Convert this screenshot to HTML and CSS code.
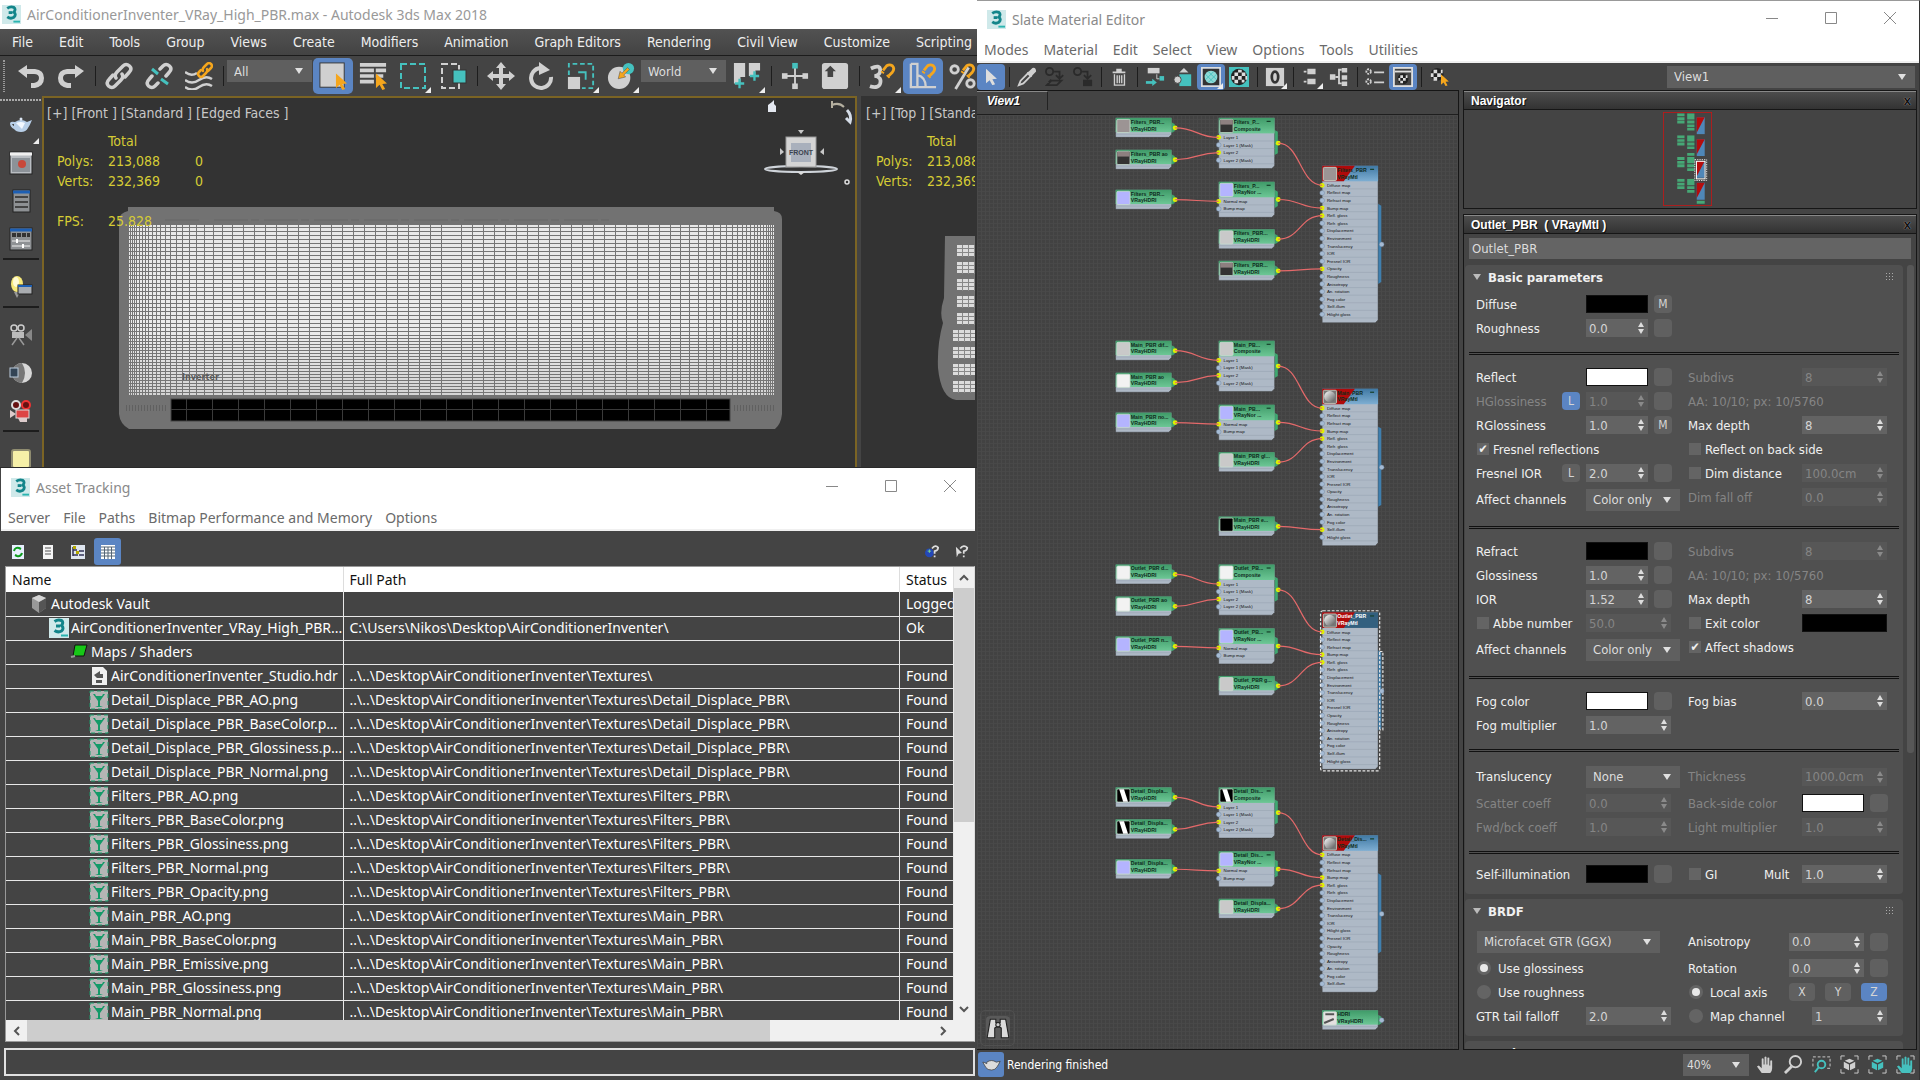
FILE: index.html
```html
<!DOCTYPE html>
<html lang="en">
<head>
    <meta charset="UTF-8">
    <meta name="viewport" content="width=device-width, initial-scale=1.0">
    <title>Autodesk 3ds Max 2018</title>
    <link rel="stylesheet" href="styles.css">
</head>
<body>
    <!-- shared icons -->
    <svg class="defs" width="0" height="0">
        <symbol id="logo" viewBox="0 0 20 20">
            <rect width="20" height="20" fill="#cfe9ea"/>
            <path d="M5.500 3.500Q9 1 12.500 2.500Q15 4.500 12.500 7.500Q15.500 10 12.500 13Q9 15 5.500 12.500" fill="none" stroke="#12858a" stroke-width="3"/>
            <path d="M7 8h4" stroke="#12858a" stroke-width="3"/>
            <path d="M12 17.500h7" stroke="#2bb5b0" stroke-width="2"/>
        </symbol>
        <symbol id="undo" viewBox="0 0 28 28"><path d="M1 9L10 3V7H18Q27 8 27 16Q27 24 18 26H14V21H17Q22 20 22 16Q22 12 17 12H10V16Z"/></symbol>
        <symbol id="redo" viewBox="0 0 28 28"><path d="M27 9L18 3V7H10Q1 8 1 16Q1 24 10 26H14V21H11Q6 20 6 16Q6 12 11 12H18V16Z"/></symbol>
        <symbol id="link" viewBox="0 0 28 28">
            <g fill="none" stroke="#d0d0d0" stroke-width="3.500" stroke-linecap="round">
                <path d="M11 16Q9 13 12 10L18 4Q21 1 24.500 4Q27.500 7 24 10.500L20 15"/>
                <path d="M17 12Q19 15 16 18L10 24Q7 27 3.500 24Q0.500 21 4 17.500L8 13"/>
            </g>
        </symbol>
        <symbol id="unlink" viewBox="0 0 28 28">
            <g fill="none" stroke="#d0d0d0" stroke-width="3.500" stroke-linecap="round">
                <path d="M15 7L18 4Q21 1 24.500 4Q27.500 7 24 10.500L21 14"/>
                <path d="M13 21L10 24Q7 27 3.500 24Q0.500 21 4 17.500L7 14"/>
            </g>
            <path d="M7 7l6 5M16 17l7 5" stroke="#45c1be" stroke-width="3"/>
        </symbol>
        <symbol id="bind" viewBox="0 0 28 28">
            <path d="M0 10q6 5 12 1M0 18q7 5 14 0t13-1M0 25q7 5 14 0t13-1" fill="none" stroke="#d0d0d0" stroke-width="2.500"/>
            <g fill="none" stroke="#f5a61d" stroke-width="2.500" stroke-linecap="round">
                <path d="M18 9Q17 7 19 5L22 2Q24 0 26 2Q28 4 26 6L23 9"/>
                <path d="M22 7Q23 9 21 11L18 14Q16 16 14 14Q12 12 14 10L16 8"/>
            </g>
        </symbol>
        <symbol id="pointer" viewBox="0 0 12 18"><path d="M0 0L12 11L7 11.500L10 17L7 18L4 12.500L0 16Z"/></symbol>
        <symbol id="select" viewBox="0 0 30 30"><rect x="1" y="1" width="26" height="26" fill="#d0d0d0" stroke="#333" stroke-width="1"/><use href="#pointer" x="18" y="12" width="12" height="18" fill="#f5a61d"/></symbol>
        <symbol id="byname" viewBox="0 0 30 30"><path d="M1 3h28M1 9h15M1 15h15M1 21h15" stroke="#d0d0d0" stroke-width="4"/><path d="M18 9h11M18 15h8" stroke="#d0d0d0" stroke-width="4"/><use href="#pointer" x="18" y="12" width="12" height="18" fill="#f5a61d"/></symbol>
        <symbol id="region" viewBox="0 0 28 28"><rect x="2" y="2" width="24" height="24" fill="none" stroke="#45c1be" stroke-width="2" stroke-dasharray="6 3"/></symbol>
        <symbol id="crossing" viewBox="0 0 28 28"><rect x="3" y="2" width="17" height="24" fill="none" stroke="#d0d0d0" stroke-width="2" stroke-dasharray="6 3"/><rect x="14" y="8" width="13" height="13" fill="#45c1be" stroke="#333"/></symbol>
        <symbol id="move" viewBox="0 0 28 28"><path d="M14 0L19 6H16V12H22V9L28 14L22 19V16H16V22H19L14 28L9 22H12V16H6V19L0 14L6 9V12H12V6H9Z"/></symbol>
        <symbol id="rotate" viewBox="0 0 28 28"><path d="M13 6A10 10 0 1 0 24 15" fill="none" stroke="#d0d0d0" stroke-width="4"/><path d="M12 0L23 8L12 13Z"/></symbol>
        <symbol id="scale" viewBox="0 0 30 30"><path d="M2 14V2H28V28H16" fill="none" stroke="#45c1be" stroke-width="2" stroke-dasharray="5 3"/><path d="M12 11H20V19" fill="none" stroke="#45c1be" stroke-width="2"/><rect x="1" y="16" width="13" height="13"/></symbol>
        <symbol id="place" viewBox="0 0 30 30"><circle cx="13" cy="17" r="12"/><circle cx="23" cy="7" r="6" fill="#45c1be"/><path d="M12 18L14 10L16 12L22 6L24 8L18 14L20 16Z" fill="#f5a61d" stroke="#444" stroke-width=".5"/></symbol>
        <symbol id="pivot" viewBox="0 0 30 30"><path d="M1 1h12v15H8v7H1zM17 1h12v8h-5v6h-7z"/><path d="M7 18v10M2 23h10M23 10v10M18 15h10" stroke="#45c1be" stroke-width="2.500"/></symbol>
        <symbol id="manip" viewBox="0 0 30 30"><path d="M15 3v24M3 15h24" stroke="#d0d0d0" stroke-width="2"/><rect x="12" y="1" width="6" height="6" fill="#45c1be"/><rect x="1" y="12" width="6" height="6"/><rect x="23" y="12" width="6" height="6"/><rect x="12" y="23" width="6" height="6"/></symbol>
        <symbol id="keyb" viewBox="0 0 30 30"><rect x="1" y="1" width="28" height="28" rx="3"/><path d="M10 4l6 6h-3v6h-6v-6h-3z" fill="#444"/></symbol>
        <symbol id="snap3" viewBox="0 0 30 30"><path d="M2 7Q12 2 12 9Q12 14 6 15Q14 16 12 23Q10 29 1 26" fill="none" stroke="#d0d0d0" stroke-width="4"/><use href="#magnet" x="12" y="1" width="17" height="17"/></symbol>
        <symbol id="magnet" viewBox="0 0 17 17"><path d="M3 8L7 3Q10 1 13 3Q16 6 13 10L9 14" fill="none" stroke="#f5a61d" stroke-width="3"/><path d="M1 9l3 2M7 13l3 3" stroke="#f5a61d" stroke-width="2"/></symbol>
        <symbol id="snapang" viewBox="0 0 30 30"><path d="M2 2V27H29M2 2h7v25M9 14q9 2 9 13" fill="none" stroke="#d0d0d0" stroke-width="2.500"/><use href="#magnet" x="13" y="1" width="17" height="17"/></symbol>
        <symbol id="snappct" viewBox="0 0 30 30"><circle cx="6" cy="8" r="4" fill="none" stroke="#d0d0d0" stroke-width="3"/><circle cx="23" cy="23" r="4" fill="none" stroke="#d0d0d0" stroke-width="3"/><path d="M7 29L21 6" stroke="#d0d0d0" stroke-width="3"/><use href="#magnet" x="12" y="1" width="17" height="17"/></symbol>

        <symbol id="teapot" viewBox="0 0 24 24"><path d="M6 9Q12 5 18 9L23 7Q21 12 19 15Q17 19 12 19Q7 19 5 16Q1 14 1 10Q2 8 6 9ZM3 11Q4 13 5 13L5 11Z" fill="#b8cfe8"/><path d="M7 10Q12 8 16 10L13 16Z" fill="#f2f8ff"/><circle cx="12" cy="6" r="1.500" fill="#dde8f5"/></symbol>
        <symbol id="rwin" viewBox="0 0 24 24"><rect x="1" y="1" width="22" height="22" fill="#b9bdc2" stroke="#222"/><path d="M1 3h22" stroke="#f0f0f0" stroke-width="3"/><rect x="3" y="7" width="18" height="14" fill="#8c9298"/><circle cx="13" cy="13" r="4" fill="#c8483a"/></symbol>
        <symbol id="list" viewBox="0 0 24 24"><rect x="4" y="1" width="17" height="22" fill="#8e9194" stroke="#222"/><path d="M4 3h17" stroke="#1d5fb4" stroke-width="3"/><path d="M6 8h13M6 13h13M6 18h13" stroke="#444" stroke-width="2"/></symbol>
        <symbol id="panel" viewBox="0 0 24 24"><rect x="1" y="1" width="22" height="22" fill="#8e9194" stroke="#222"/><path d="M1 3h22" stroke="#1d5fb4" stroke-width="3"/><path d="M3 8h18" stroke="#333" stroke-width="4" stroke-dasharray="4 1"/><path d="M3 14h18M3 19h18" stroke="#eee" stroke-width="1"/><path d="M8 12v4M14 17v4" stroke="#fff" stroke-width="2"/></symbol>
        <symbol id="bulb" viewBox="0 0 24 24"><ellipse cx="8" cy="9" rx="6" ry="8" fill="#f7e97a"/><ellipse cx="7" cy="7" rx="3" ry="5" fill="#fffbd5"/><path d="M5 17h6l-3 6z" fill="#999"/><rect x="9" y="10" width="14" height="9" fill="#a9acb0" stroke="#222"/><path d="M9 11h14" stroke="#1d5fb4" stroke-width="2"/></symbol>
        <symbol id="camera" viewBox="0 0 24 24"><circle cx="5" cy="5" r="3" fill="#444" stroke="#ccc" stroke-width="1.500"/><circle cx="12" cy="5" r="3" fill="#444" stroke="#ccc" stroke-width="1.500"/><rect x="3" y="9" width="12" height="6" fill="#bbb"/><path d="M16 12l7-6v12z" fill="#888"/><path d="M8 15l-5 7M10 15l5 7" stroke="#999" stroke-width="1.500"/></symbol>
        <symbol id="sphere" viewBox="0 0 24 24"><circle cx="13" cy="12" r="10" fill="#d8d8d8"/><path d="M13 2A10 10 0 0 0 13 22Q19 12 13 2Z" fill="#777"/><rect x="1" y="7" width="8" height="9" fill="#345" stroke="#bcd"/></symbol>
        <symbol id="redcam" viewBox="0 0 24 24"><circle cx="7" cy="6" r="4" fill="#611" stroke="#ddd" stroke-width="2"/><circle cx="17" cy="6" r="4" fill="#611" stroke="#e33" stroke-width="2"/><rect x="7" y="11" width="13" height="8" fill="#d44" stroke="#ddd"/><path d="M1 11l6 4l-6 4zM9 19h9v4h-7z" fill="#dcc"/></symbol>
        <symbol id="ylight" viewBox="0 0 24 24"><rect x="3" y="3" width="18" height="18" rx="2" fill="#f6f0a8" stroke="#8f8c70" stroke-width="2"/></symbol>

        <symbol id="dropper" viewBox="0 0 22 22"><path d="M2 20L4 15L12 7L15 10L7 18Z" fill="none" stroke="#d0d0d0" stroke-width="2"/><path d="M11 6L13 5L17 1Q21 0 21 5L17 9L16 11Z"/></symbol>
        <symbol id="put" viewBox="0 0 22 22"><g fill="none" stroke="#2a2a2a" stroke-width="2"><circle cx="5" cy="5" r="4"/><path d="M10 5h6v7M12 9l4 4l4-4M2 20l5-5h11l-5 5zM4 17l3-3"/></g></symbol>
        <symbol id="put2" viewBox="0 0 22 22"><g fill="none" stroke="#2a2a2a" stroke-width="2"><circle cx="5" cy="5" r="4"/><path d="M10 5h6v7M12 9l4 4l4-4"/></g><path d="M11 14h10v7H11z" fill="#2a2a2a"/></symbol>
        <symbol id="trash" viewBox="0 0 22 22"><path d="M4 5h14v2H4zM8 2h6v3H8z"/><path d="M6 8v12h11V8M9 9v9M11.500 9v9M14 9v9" fill="none" stroke="#d0d0d0" stroke-width="1.500"/></symbol>
        <symbol id="movech" viewBox="0 0 22 22"><rect x="3" y="1" width="13" height="6"/><path d="M13 8v5h3" fill="none" stroke="#d0d0d0"/><rect x="16" y="10" width="5" height="5" fill="#45c1be"/><path d="M1 17h9" stroke="#45c1be" stroke-width="3"/><path d="M8 13l5 4l-5 4z" fill="#45c1be"/></symbol>
        <symbol id="hide" viewBox="0 0 22 22"><path d="M12 1l5 5H7z"/><rect x="7" y="8" width="13" height="13" fill="#45c1be"/><circle cx="5" cy="14" r="4" stroke="#444"/></symbol>
        <symbol id="shade" viewBox="0 0 22 22"><rect x="1" y="1" width="20" height="20" fill="none" stroke="#ddd" stroke-width="2"/><rect x="2" y="2" width="18" height="18" fill="#333"/><circle cx="11" cy="11" r="7" fill="#8fd8d5"/><path d="M5 8l9 9M8 5l9 9M5 14l9-9M8 17l9-9" stroke="#45c1be"/></symbol>
        <symbol id="checker" viewBox="0 0 22 22"><rect width="22" height="22" fill="#45c1be"/><circle cx="11" cy="11" r="9" fill="#222"/><path d="M6 6h4v4H6zM14 6h4v4h-4zM10 10h4v4h-4zM6 14h4v4H6zM14 14h3v3h-3zM10 3h4v3h-4zM3 10h3v4H3zM18 10h2v4h-2z" fill="#ddd"/></symbol>
        <symbol id="zero" viewBox="0 0 22 22"><rect x="1" y="1" width="20" height="20"/><ellipse cx="11" cy="11" rx="3.500" ry="6" fill="none" stroke="#333" stroke-width="3"/></symbol>
        <symbol id="layall" viewBox="0 0 22 22"><path d="M7 2h9v6H7zM7 13h9v6H7z"/><path d="M6 5H3M6 16H3" stroke="#d0d0d0" stroke-width="2"/></symbol>
        <symbol id="laych" viewBox="0 0 22 22"><path d="M14 1h6v5h-6zM14 9h6v5h-6zM14 16h6v5h-6zM1 8h6v6H1z"/><path d="M7 11h4M14 3h-3v15h3" fill="none" stroke="#d0d0d0" stroke-width="2"/></symbol>
        <symbol id="browser" viewBox="0 0 22 22"><circle cx="4" cy="5" r="2.500" fill="none" stroke="#d0d0d0" stroke-width="2" stroke-dasharray="2 1"/><circle cx="4" cy="16" r="2.500" fill="none" stroke="#d0d0d0" stroke-width="2" stroke-dasharray="2 1"/><path d="M10 6h11M10 17h11" stroke="#d0d0d0" stroke-width="2"/></symbol>
        <symbol id="pwin" viewBox="0 0 22 22"><rect x="1" y="1" width="20" height="20" fill="#444" stroke="#e0e0e0" stroke-width="2"/><path d="M2 5h18" stroke="#e0e0e0" stroke-width="2"/><circle cx="11" cy="13" r="6" fill="#222"/><path d="M8 9h3v3H8zM11 12h3v3h-3zM6 12h2v3H6zM8 15h3v3H8zM14 9h2v3h-2z" fill="#ddd"/></symbol>
        <symbol id="matsel" viewBox="0 0 22 22"><circle cx="9" cy="8" r="7" fill="#222"/><path d="M5 3h4v4H5zM9 7h4v4H9zM2 7h3v4H2zM5 11h4v4H5zM13 3h2v4h-2z" fill="#ddd"/><use href="#pointer" x="13" y="8" width="9" height="13" fill="#f5a61d"/></symbol>
        <symbol id="hand" viewBox="0 0 20 20"><path d="M6 19L1 12L3 11L6 14V4Q7 3 8 4V10H9V2Q10 1 11 2V10H12V3Q13 2 14 3V11H15V6Q16 5 17 6V14Q17 17 15 19Z"/></symbol>
        <symbol id="zoom" viewBox="0 0 20 20"><circle cx="12" cy="7" r="6" fill="none" stroke="#d0d0d0" stroke-width="2"/><path d="M8 12L1 19" stroke="#d0d0d0" stroke-width="3"/></symbol>
        <symbol id="zoomreg" viewBox="0 0 20 20"><path d="M1 12V2H19V14H16" fill="none" stroke="#d0d0d0" stroke-dasharray="3 2"/><circle cx="10" cy="10" r="4" fill="none" stroke="#45c1be" stroke-width="2"/><path d="M7 13L3 18" stroke="#45c1be" stroke-width="2"/></symbol>
        <symbol id="corners" viewBox="0 0 20 20"><path d="M1 5V1H5M15 1H19V5M19 15V19H15M5 19H1V15" fill="none" stroke="#d0d0d0"/></symbol>
        <symbol id="cube" viewBox="0 0 20 20"><path d="M10 4L15 6L10 8.500L5 6ZM4 7L9.500 10V16L4 13.500ZM16 7L10.500 10V16L16 13.500Z"/></symbol>
        <symbol id="binoc" viewBox="0 0 22 22"><path d="M4 3h5v3h4V3h5l3 17h-7v-9q-3-2-6 0v9H1z" fill="#dcdcdc" stroke="#222"/><circle cx="11" cy="8" r="2" fill="#ccc" stroke="#222"/></symbol>

        <symbol id="ico-vault" viewBox="0 0 20 20"><path d="M10 1L17 4V14L10 19L3 14V4Z" fill="#999"/><path d="M10 8L17 4V14L10 19Z" fill="#555"/><path d="M10 1l7 3l-7 4l-7-4z" fill="#d5d5d5"/></symbol>
        <symbol id="ico-max" viewBox="0 0 20 20"><use href="#logo"/></symbol>
        <symbol id="ico-map" viewBox="0 0 20 20"><path d="M6 3h12l-3 11H4z" fill="#17c717" stroke="#111"/><path d="M2 15l4-1" stroke="#999" stroke-width="2"/></symbol>
        <symbol id="ico-hdr" viewBox="0 0 20 20"><path d="M3 1h11l4 4v14H3z" fill="#f0f0f0"/><path d="M5 9l6-4v3h3v4H8z" fill="#555"/><rect x="7" y="14" width="6" height="3" fill="#555"/></symbol>
        <symbol id="ico-png" viewBox="0 0 20 20"><rect x="1" y="1" width="18" height="18" fill="#b5b5b5" stroke="#1a9d6c" stroke-dasharray="4 3"/><path d="M4 4h2l1 2h6l1-2h2l-5 7v5l3 1H6l3-1v-5z" fill="#149a68"/></symbol>
    </svg>

    <div class="desktop">
        <!-- main application window -->
        <section class="max">
            <header class="titlebar">
                <svg class="logo"><use href="#logo"/></svg>
                <span>AirConditionerInventer_VRay_High_PBR.max - Autodesk 3ds Max 2018</span>
            </header>
            <nav class="menu">
                <button>File</button><button>Edit</button><button>Tools</button><button>Group</button><button>Views</button><button>Create</button><button>Modifiers</button><button>Animation</button><button>Graph Editors</button><button>Rendering</button><button>Civil View</button><button>Customize</button><button>Scripting</button>
            </nav>
            <div class="toolbar">
                <span class="grip"></span>
                <button class="tool" aria-label="Undo"><svg><use href="#undo"/></svg></button>
                <button class="tool" aria-label="Redo"><svg><use href="#redo"/></svg></button>
                <i class="sep"></i>
                <button class="tool" aria-label="Link"><svg><use href="#link"/></svg></button>
                <button class="tool" aria-label="Unlink"><svg><use href="#unlink"/></svg></button>
                <button class="tool" aria-label="Bind"><svg><use href="#bind"/></svg></button>
                <i class="sep"></i>
                <span class="combo combo-top"><select aria-label="Selection filter"><option>All</option></select></span>
                <button class="tool on" aria-label="Select"><svg><use href="#select"/></svg></button>
                <button class="tool" aria-label="Select by name"><svg><use href="#byname"/></svg></button>
                <button class="tool fly" aria-label="Region"><svg><use href="#region"/></svg></button>
                <button class="tool" aria-label="Crossing"><svg><use href="#crossing"/></svg></button>
                <i class="sep"></i>
                <button class="tool" aria-label="Move"><svg><use href="#move"/></svg></button>
                <button class="tool" aria-label="Rotate"><svg><use href="#rotate"/></svg></button>
                <button class="tool fly" aria-label="Scale"><svg><use href="#scale"/></svg></button>
                <button class="tool fly" aria-label="Place"><svg><use href="#place"/></svg></button>
                <span class="combo combo-top"><select aria-label="Coordinates"><option>World</option></select></span>
                <button class="tool fly" aria-label="Pivot"><svg><use href="#pivot"/></svg></button>
                <i class="sep"></i>
                <button class="tool" aria-label="Manipulate"><svg><use href="#manip"/></svg></button>
                <button class="tool" aria-label="Keyboard override"><svg><use href="#keyb"/></svg></button>
                <i class="sep"></i>
                <button class="tool fly" aria-label="Snaps"><svg><use href="#snap3"/></svg></button>
                <button class="tool on" aria-label="Angle snap"><svg><use href="#snapang"/></svg></button>
                <button class="tool" aria-label="Percent snap"><svg><use href="#snappct"/></svg></button>
            </div>
            <div class="stage">
                <div class="side">
                    <button class="fly" aria-label="Render"><svg><use href="#teapot"/></svg></button>
                    <button aria-label="Frame window"><svg><use href="#rwin"/></svg></button>
                    <button aria-label="Render setup"><svg><use href="#list"/></svg></button>
                    <button aria-label="Environment"><svg><use href="#panel"/></svg></button>
                    <hr>
                    <button aria-label="Light lister"><svg><use href="#bulb"/></svg></button>
                    <hr>
                    <button aria-label="Camera"><svg><use href="#camera"/></svg></button>
                    <button aria-label="Dome camera"><svg><use href="#sphere"/></svg></button>
                    <button aria-label="Stereo camera"><svg><use href="#redcam"/></svg></button>
                    <hr>
                    <button aria-label="Plane light"><svg><use href="#ylight"/></svg></button>
                </div>
                <div class="viewport active">
                    <svg class="scene" id="frontScene">
                        <defs>
                            <linearGradient id="shell" x1="0" y1="0" x2="0" y2="1">
                                <stop offset="0" stop-color="#e8e8e8"/><stop offset=".6" stop-color="#ececec"/><stop offset="1" stop-color="#d4d4d4"/>
                            </linearGradient>
                        </defs>
                        <path d="M84 109H730V113Q738 114 738 121V316Q737 326 731 331H85Q76 326 75 316V121Q76 115 84 113Z" fill="#727272"/>
                        <path d="M121 122h36M170 122h400" stroke="#666" stroke-dasharray="34 3 8 5"/>
                        <rect x="85" y="127" width="645" height="170" fill="url(#shell)"/>
                        <g id="mesh" stroke="#757575"></g>
                        <rect x="127" y="301" width="559" height="22" fill="#000" stroke="#444"/>
                        <g id="louver" stroke="#3a3a3a"></g>
                        <path d="M82 310h40M690 310h40" stroke="#606060" stroke-width="6" stroke-dasharray="1 2"/>
                        <text x="138" y="282" class="brand">Inverter</text>
                    </svg>
                    <p class="vlabel">[+] [Front ] [Standard ] [Edged Faces ]</p>
                    <div class="stats">
                        <span></span><span>Total</span><span></span>
                        <span>Polys:</span><span>213,088</span><span>0</span>
                        <span>Verts:</span><span>232,369</span><span>0</span>
                        <span></span><span></span><span></span>
                        <span>FPS:</span><span>25.828</span><span></span>
                    </div>
                    <svg class="viewcube" width="100" height="90">
                        <path d="M13 14V7L17 4L19 2V6L21 8V14Z" fill="#e4e8f0"/>
                        <path d="M77 7Q84 4 89 9M77 3v7" fill="none" stroke="#b5b0a0" stroke-width="2"/>
                        <path d="M92 12Q97 17 95 24L91 20" fill="none" stroke="#d5dde8" stroke-width="3"/>
                        <path d="M43 32h6l-3 4zM25 50v7l4-3zM69 50v7l-4-3z" fill="#c8c8c8"/>
                        <ellipse cx="46" cy="71" rx="36" ry="3" fill="none" stroke="#cfd4da" stroke-width="2"/>
                        <rect x="31" y="39" width="30" height="30" fill="#d4d4d4" stroke="#9a9a9a"/>
                        <rect x="36" y="45" width="20" height="19" fill="#a9b0bc"/>
                        <text x="46" y="57" class="cubetext" text-anchor="middle">FRONT</text>
                        <path d="M42 74h8l-4 3z" fill="#ddd"/>
                        <circle cx="92" cy="84" r="2" fill="none" stroke="#ddd" stroke-width="1.500"/>
                    </svg>
                </div>
                <div class="viewport top">
                    <svg class="scene" id="topScene">
                        <path d="M82 138H116V302H93Q78 300 75 270Q74 246 80 225Q76 215 81 200Z" fill="#727272"/>
                        <g id="topMesh"></g>
                    </svg>
                    <p class="vlabel">[+] [Top ] [Standard ]</p>
                    <div class="stats">
                        <span></span><span>Total</span><span></span>
                        <span>Polys:</span><span>213,088</span><span></span>
                        <span>Verts:</span><span>232,369</span><span></span>
                    </div>
                </div>
            </div>
        </section>

        <!-- asset tracking window -->
        <section class="assets">
            <header class="wintitle">
                <svg class="logo"><use href="#logo"/></svg>
                <span>Asset Tracking</span>
                <div class="winbtns">
                    <button aria-label="Minimize"><svg viewBox="0 0 14 14"><path d="M1 7.500h12"/></svg></button>
                    <button aria-label="Maximize"><svg viewBox="0 0 14 14"><path d="M1.500 1.500h11v11h-11z"/></svg></button>
                    <button aria-label="Close"><svg viewBox="0 0 14 14"><path d="M1 1l12 12M13 1L1 13"/></svg></button>
                </div>
            </header>
            <nav class="winmenu">
                <button>Server</button><button>File</button><button>Paths</button><button>Bitmap Performance and Memory</button><button>Options</button>
            </nav>
            <div class="assetbar">
                <button aria-label="Refresh"><svg viewBox="0 0 14 14"><rect x="1" width="12" height="14" fill="#e8f0ff"/><path d="M3 6q1-4 5-3l2 1M11 8q-1 4-5 3l-2-1" fill="none" stroke="#0c9a1c" stroke-width="2"/></svg></button>
                <button aria-label="Log"><svg viewBox="0 0 14 14"><rect x="2" width="10" height="14" fill="#f5f5f5"/><path d="M4 3h6M4 6h6M4 9h6" stroke="#555"/></svg></button>
                <button aria-label="Tree view"><svg viewBox="0 0 14 14"><rect width="14" height="14" fill="#dfe6f0"/><path d="M2 2v9M2 5h4M2 10h5M8 6h5M8 10h5" stroke="#335" stroke-width="1.500"/><path d="M2 1h3v3H2zM5 6h3v3H5z" fill="#b5a900"/></svg></button>
                <button class="on" aria-label="Table view"><svg viewBox="0 0 14 14"><rect width="14" height="14" fill="#fff"/><path d="M0 2h14M0 5h14M0 8h14M0 11h14M3.500 2v12M7 2v12M10.500 2v12" stroke="#567"/></svg></button>
                <span class="grow"></span>
                <button aria-label="Help"><svg viewBox="0 0 16 16"><circle cx="5" cy="9" r="5" fill="#2448b8"/><path d="M3 7h4M5 5v4" stroke="#7fe08a"/><path d="M8 4q4-5 7-1q0 3-4 4v3M11 12v2" fill="none" stroke="#ddd" stroke-width="2"/></svg></button>
                <button aria-label="What is this"><svg viewBox="0 0 16 16"><path d="M1 2l7 7l-4 1l-2 4z" fill="#ddd"/><path d="M6 4q4-5 8-1q0 3-4 4v3M10 12v2" fill="none" stroke="#ddd" stroke-width="2"/></svg></button>
            </div>
            <div class="listframe">
                <div class="listclip">
                    <table class="files">
                        <colgroup><col class="c-name"><col><col class="c-status"></colgroup>
                        <thead><tr><th>Name</th><th>Full Path</th><th>Status</th></tr></thead>
                        <tbody id="fileRows"></tbody>
                    </table>
                </div>
                <div class="vscroll">
                    <svg viewBox="0 0 10 6"><path d="M1 5l4-4l4 4"/></svg>
                    <div class="track"><div class="thumb"></div></div>
                    <svg viewBox="0 0 10 6"><path d="M1 1l4 4l4-4"/></svg>
                </div>
                <div class="hscroll">
                    <svg viewBox="0 0 6 10"><path d="M5 1l-4 4l4 4"/></svg>
                    <div class="track"><div class="thumb"></div></div>
                    <svg viewBox="0 0 6 10"><path d="M1 1l4 4l-4 4"/></svg>
                </div>
            </div>
            <div class="statusbox"></div>
        </section>

        <!-- slate material editor -->
        <section class="slate">
            <header class="wintitle">
                <svg class="logo"><use href="#logo"/></svg>
                <span>Slate Material Editor</span>
                <div class="winbtns">
                    <button aria-label="Minimize"><svg viewBox="0 0 14 14"><path d="M1 7.500h12"/></svg></button>
                    <button aria-label="Maximize"><svg viewBox="0 0 14 14"><path d="M1.500 1.500h11v11h-11z"/></svg></button>
                    <button aria-label="Close"><svg viewBox="0 0 14 14"><path d="M1 1l12 12M13 1L1 13"/></svg></button>
                </div>
            </header>
            <nav class="winmenu">
                <button>Modes</button><button>Material</button><button>Edit</button><button>Select</button><button>View</button><button>Options</button><button>Tools</button><button>Utilities</button>
            </nav>
            <div class="slatebar">
                <button class="on" aria-label="Select"><svg viewBox="0 0 22 22"><use href="#pointer" x="5" y="2" width="13" height="18" fill="#ddd"/></svg></button>
                <i class="sep"></i>
                <button aria-label="Pick"><svg><use href="#dropper"/></svg></button>
                <button aria-label="Put to scene"><svg><use href="#put"/></svg></button>
                <button aria-label="Assign"><svg><use href="#put2"/></svg></button>
                <i class="sep"></i>
                <button aria-label="Delete"><svg><use href="#trash"/></svg></button>
                <i class="sep"></i>
                <button aria-label="Move children"><svg><use href="#movech"/></svg></button>
                <button aria-label="Hide unused"><svg><use href="#hide"/></svg></button>
                <button class="on fly" aria-label="Show shaded"><svg><use href="#shade"/></svg></button>
                <button aria-label="Background"><svg><use href="#checker"/></svg></button>
                <i class="sep"></i>
                <button class="fly" aria-label="Material ID"><svg><use href="#zero"/></svg></button>
                <i class="sep"></i>
                <button class="fly" aria-label="Lay out all"><svg><use href="#layall"/></svg></button>
                <button aria-label="Lay out children"><svg><use href="#laych"/></svg></button>
                <i class="sep"></i>
                <button aria-label="Browser"><svg><use href="#browser"/></svg></button>
                <button class="on" aria-label="Parameters"><svg><use href="#pwin"/></svg></button>
                <i class="sep"></i>
                <button aria-label="Select by material"><svg><use href="#matsel"/></svg></button>
                <span class="grow"></span>
                <span class="combo combo-view"><select aria-label="View"><option>View1</option></select></span>
            </div>
            <div class="slatebody">
                <div class="graph">
                    <div class="tabs"><button>View1</button></div>
                    <div class="canvas">
                        <svg id="nodes" viewBox="0 0 1200 2338" preserveAspectRatio="xMinYMin meet">
                            <defs>
                                <linearGradient id="green" x1="0" y1="0" x2="0" y2="1"><stop offset="0" stop-color="#3f9a68"/><stop offset="1" stop-color="#6cc795"/></linearGradient>
                                <linearGradient id="blue" x1="0" y1="0" x2="0" y2="1"><stop offset="0" stop-color="#3f78a3"/><stop offset="1" stop-color="#7eaed2"/></linearGradient>
                                <linearGradient id="ball" x1="0" y1="0" x2="1" y2="1"><stop offset="0" stop-color="#fff"/><stop offset="1" stop-color="#555"/></linearGradient>
                            </defs>
                        </svg>
                        <button class="find" aria-label="Search"><svg><use href="#binoc"/></svg></button>
                    </div>
                </div>
                <div class="panels">
                    <div class="dock">
                        <h2>Navigator <button aria-label="Close">x</button></h2>
                        <div class="navi">
                            <svg viewBox="0 0 148 284">
                                <symbol id="mini" viewBox="0 0 90 64">
                                    <path d="M2 0h22v9H2zM2 12h22v8H2zM2 22h22v9H2zM32 0h22v19H32zM32 22h22v9H32zM32 34h22v8H32z" fill="#46a876"/>
                                    <path d="M61 12h24v51H61z" fill="#4f87b8"/><path d="M61 12h24L61 58z" fill="#b50d0d"/>
                                </symbol>
                                <rect x="1" y="1" width="146" height="282" fill="none" stroke="#c01818" stroke-width="3"/>
                                <use href="#mini" x="41" y="4" width="90" height="64"/>
                                <use href="#mini" x="41" y="70" width="90" height="64"/>
                                <use href="#mini" x="41" y="136" width="90" height="64"/>
                                <use href="#mini" x="41" y="202" width="90" height="64"/>
                                <path d="M73 48h22v8H73zM73 124h22v8H73zM102 268h24v9h-24z" fill="#46a876"/>
                                <rect x="96" y="144" width="36" height="63" fill="none" stroke="#ddd" stroke-width="3" stroke-dasharray="4 3"/>
                                <rect x="101" y="149" width="26" height="53" fill="none" stroke="#fff" stroke-width="3"/>
                            </svg>
                        </div>
                    </div>
                    <div class="dock dock-params">
                        <h2>Outlet_PBR&nbsp; ( VRayMtl ) <button aria-label="Close">x</button></h2>
                        <input class="matname" type="text" value="Outlet_PBR" aria-label="Material name">
                        <div class="scrollarea">
                            <div class="rollouts">
                                <div class="rollout">
                                    <h3>Basic parameters</h3>
                                    <div class="group first">
                                        <div>
                                            <div class="row"><span class="lbl">Diffuse</span><button class="swatch black" aria-label="Diffuse color"></button><button class="map">M</button></div>
                                            <div class="row"><label class="lbl" for="rough">Roughness</label><span class="spin"><input id="rough" value="0.0"></span><button class="map" aria-label="Map"></button></div>
                                        </div>
                                    </div>
                                    <div class="group">
                                        <div>
                                            <div class="row"><span class="lbl">Reflect</span><button class="swatch white" aria-label="Reflect color"></button><button class="map" aria-label="Map"></button></div>
                                            <div class="row off"><label class="lbl lk" for="hgl">HGlossiness</label><button class="map lock on">L</button><span class="spin"><input id="hgl" value="1.0" disabled></span><button class="map" aria-label="Map"></button></div>
                                            <div class="row"><label class="lbl" for="rgl">RGlossiness</label><span class="spin"><input id="rgl" value="1.0"></span><button class="map">M</button></div>
                                            <div class="row"><label class="check"><input type="checkbox" checked>Fresnel reflections</label></div>
                                            <div class="row"><label class="lbl lk" for="fior">Fresnel IOR</label><button class="map lock">L</button><span class="spin"><input id="fior" value="2.0"></span><button class="map" aria-label="Map"></button></div>
                                            <div class="row tall"><label class="lbl" for="aff1">Affect channels</label><span class="combo combo-mid"><select id="aff1"><option>Color only</option></select></span></div>
                                        </div>
                                        <div>
                                            <div class="row off"><label class="lbl" for="sub1">Subdivs</label><span class="spin wide"><input id="sub1" value="8" disabled></span></div>
                                            <div class="row off"><span>AA: 10/10; px: 10/5760</span></div>
                                            <div class="row"><label class="lbl" for="dep1">Max depth</label><span class="spin wide"><input id="dep1" value="8"></span></div>
                                            <div class="row"><label class="check"><input type="checkbox">Reflect on back side</label></div>
                                            <div class="row"><label class="check lbl"><input type="checkbox">Dim distance</label><span class="spin wide off"><input value="100.0cm" aria-label="Dim distance value" disabled></span></div>
                                            <div class="row off"><label class="lbl" for="dfo">Dim fall off</label><span class="spin wide"><input id="dfo" value="0.0" disabled></span></div>
                                        </div>
                                    </div>
                                    <div class="group">
                                        <div>
                                            <div class="row"><span class="lbl">Refract</span><button class="swatch black" aria-label="Refract color"></button><button class="map" aria-label="Map"></button></div>
                                            <div class="row"><label class="lbl" for="gl">Glossiness</label><span class="spin"><input id="gl" value="1.0"></span><button class="map" aria-label="Map"></button></div>
                                            <div class="row"><label class="lbl" for="ior">IOR</label><span class="spin"><input id="ior" value="1.52"></span><button class="map" aria-label="Map"></button></div>
                                            <div class="row"><label class="check lbl"><input type="checkbox">Abbe number</label><span class="spin wide off"><input value="50.0" aria-label="Abbe value" disabled></span></div>
                                            <div class="row tall"><label class="lbl" for="aff2">Affect channels</label><span class="combo combo-mid"><select id="aff2"><option>Color only</option></select></span></div>
                                        </div>
                                        <div>
                                            <div class="row off"><label class="lbl" for="sub2">Subdivs</label><span class="spin wide"><input id="sub2" value="8" disabled></span></div>
                                            <div class="row off"><span>AA: 10/10; px: 10/5760</span></div>
                                            <div class="row"><label class="lbl" for="dep2">Max depth</label><span class="spin wide"><input id="dep2" value="8"></span></div>
                                            <div class="row"><label class="check lbl"><input type="checkbox">Exit color</label><button class="swatch wide black" aria-label="Exit color"></button></div>
                                            <div class="row"><label class="check"><input type="checkbox" checked>Affect shadows</label></div>
                                        </div>
                                    </div>
                                    <div class="group">
                                        <div>
                                            <div class="row"><span class="lbl">Fog color</span><button class="swatch white" aria-label="Fog color"></button><button class="map" aria-label="Map"></button></div>
                                            <div class="row"><label class="lbl" for="fogm">Fog multiplier</label><span class="spin wide"><input id="fogm" value="1.0"></span></div>
                                        </div>
                                        <div>
                                            <div class="row"><label class="lbl" for="fogb">Fog bias</label><span class="spin wide"><input id="fogb" value="0.0"></span></div>
                                        </div>
                                    </div>
                                    <div class="group">
                                        <div>
                                            <div class="row tall"><label class="lbl" for="trans">Translucency</label><span class="combo combo-mid"><select id="trans"><option>None</option></select></span></div>
                                            <div class="row off"><label class="lbl" for="scat">Scatter coeff</label><span class="spin wide"><input id="scat" value="0.0" disabled></span></div>
                                            <div class="row off"><label class="lbl" for="fwd">Fwd/bck coeff</label><span class="spin wide"><input id="fwd" value="1.0" disabled></span></div>
                                        </div>
                                        <div>
                                            <div class="row tall off"><label class="lbl" for="thick">Thickness</label><span class="spin wide"><input id="thick" value="1000.0cm" disabled></span></div>
                                            <div class="row off"><span class="lbl">Back-side color</span><button class="swatch white" aria-label="Back-side color"></button><button class="map" aria-label="Map"></button></div>
                                            <div class="row off"><label class="lbl" for="lmul">Light multiplier</label><span class="spin wide"><input id="lmul" value="1.0" disabled></span></div>
                                        </div>
                                    </div>
                                    <div class="group last">
                                        <div>
                                            <div class="row"><span class="lbl">Self-illumination</span><button class="swatch black" aria-label="Self-illumination color"></button><button class="map" aria-label="Map"></button></div>
                                        </div>
                                        <div>
                                            <div class="row"><label class="check gi"><input type="checkbox">GI</label><label class="mult" for="mult">Mult</label><span class="spin wide"><input id="mult" value="1.0"></span></div>
                                        </div>
                                    </div>
                                </div>
                                <div class="rollout">
                                    <h3>BRDF</h3>
                                    <div class="group brdf">
                                        <div>
                                            <div class="row tall"><span class="combo combo-big"><select aria-label="BRDF type"><option>Microfacet GTR (GGX)</option></select></span></div>
                                            <div class="row"><label class="radio"><input type="radio" name="gloss" checked>Use glossiness</label></div>
                                            <div class="row"><label class="radio"><input type="radio" name="gloss">Use roughness</label></div>
                                            <div class="row"><label class="lbl" for="gtr">GTR tail falloff</label><span class="spin wide"><input id="gtr" value="2.0"></span></div>
                                        </div>
                                        <div class="narrow">
                                            <div class="row tall"><label class="lbl" for="anis">Anisotropy</label><span class="spin"><input id="anis" value="0.0"></span><button class="map" aria-label="Map"></button></div>
                                            <div class="row"><label class="lbl" for="rot">Rotation</label><span class="spin"><input id="rot" value="0.0"></span><button class="map" aria-label="Map"></button></div>
                                            <div class="row"><label class="radio lbl"><input type="radio" name="axis" checked>Local axis</label><div class="axes"><button class="map">X</button><button class="map">Y</button><button class="map on">Z</button></div></div>
                                            <div class="row end"><label class="radio"><input type="radio" name="axis">Map channel</label><span class="spin"><input value="1" aria-label="Map channel number"></span></div>
                                        </div>
                                    </div>
                                </div>
                                <div class="rollout"><h3>Options</h3></div>
                            </div>
                            <div class="pscroll"></div>
                        </div>
                    </div>
                </div>
            </div>
            <footer class="slatefoot">
                <button class="on" aria-label="Preview"><svg viewBox="0 0 24 24"><path d="M6 9Q12 5 18 9L23 8Q21 12 19 15Q17 19 12 19Q7 19 5 16L1 9Q3 9 6 11Z" fill="#dcdcdc" stroke="#444"/></svg></button>
                <span>Rendering finished</span>
                <span class="grow"></span>
                <span class="combo combo-zoom"><select aria-label="Zoom"><option>40%</option></select></span>
                <button aria-label="Pan"><svg><use href="#hand"/></svg></button>
                <button aria-label="Zoom tool"><svg><use href="#zoom"/></svg></button>
                <button aria-label="Zoom region"><svg><use href="#zoomreg"/></svg></button>
                <button aria-label="Zoom extents"><svg><use href="#corners"/><use href="#cube"/></svg></button>
                <button class="teal" aria-label="Zoom extents selected"><svg><use href="#corners"/><use href="#cube"/></svg></button>
                <button class="teal" aria-label="Pan to selected"><svg><use href="#corners"/><use href="#hand"/></svg></button>
            </footer>
        </section>
    </div>

    <script>
        // ---------- file list ----------
        const base = '..\\..\\Desktop\\AirConditionerInventer\\Textures\\';
        const files = [
            [0, 'vault', 'Autodesk Vault', '', 'Logged'],
            [1, 'max', 'AirConditionerInventer_VRay_High_PBR...', 'C:\\Users\\Nikos\\Desktop\\AirConditionerInventer\\', 'Ok'],
            [2, 'map', 'Maps / Shaders', '', ''],
            [3, 'hdr', 'AirConditionerInventer_Studio.hdr', base, 'Found']
        ];
        const sets = {
            Detail_Displace_PBR: ['AO', 'BaseColor', 'Glossiness', 'Normal'],
            Filters_PBR: ['AO', 'BaseColor', 'Glossiness', 'Normal', 'Opacity'],
            Main_PBR: ['AO', 'BaseColor', 'Emissive', 'Glossiness', 'Normal']
        };
        for (const name in sets) {
            sets[name].forEach(m => files.push([3, 'png', `${name}_${m}.png`, base + name + '\\', 'Found']));
        }
        document.getElementById('fileRows').innerHTML = files.map(f =>
            `<tr><td class="lvl${f[0]}"><svg><use href="#ico-${f[1]}"/></svg>${f[2]}</td><td>${f[3]}</td><td>${f[4]}</td></tr>`
        ).join('');

        // ---------- wireframes ----------
        let lines = '';
        // columns get wider towards the middle of the shell
        for (let x = 86, step = 2; x < 400; x += Math.round(step), step = Math.min(11, step * 1.09)) {
            lines += `<path d="M${x}.5 127V297M${814 - x}.5 127V297"/>`;
        }
        for (let y = 129; y < 240; y += 4) lines += `<path d="M85 ${y}.5H730"/>`;
        for (let y = 240; y < 297; y += 3) lines += `<path d="M85 ${y}.5H730"/>`;
        document.getElementById('mesh').innerHTML = lines;

        lines = '<path d="M127 311.500H686"/>';
        for (let x = 142; x < 686; x += 26) lines += `<path d="M${x}.5 301V323"/>`;
        document.getElementById('louver').innerHTML = lines;

        lines = '';
        for (let i = 0; i < 9; i++) {
            const y = 147 + i * 17;
            const x = i > 4 ? 90 : 94;
            lines += `<rect x="${x}" y="${y}" width="26" height="11" fill="#dcdcdc"/>`;
            lines += `<path d="M${x} ${y + 3}.5h26M${x} ${y + 7}.5h26M${x + 5}.5 ${y}v12M${x + 11}.5 ${y}v12M${x + 17}.5 ${y}v12" stroke="#888"/>`;
        }
        document.getElementById('topMesh').innerHTML = lines;

        // ---------- node graph (scene units, shown at 40%) ----------
        const wires = [];
        const parts = [];
        const mtlSlots = ['Diffuse map', 'Reflect map', 'Refract map', 'Bump map', 'Refl. gloss', 'Refr. gloss', 'Displacement', 'Environment', 'Translucency', 'IOR', 'Fresnel IOR', 'Opacity', 'Roughness', 'Anisotropy', 'An. rotation', 'Fog color', 'Self-illum', 'Hilight gloss'];
        const detailSlots = mtlSlots.filter(s => s !== 'Hilight gloss');
        detailSlots.splice(10, 0, 'Hilight gloss');

        const dot = (x, y, on) => `<circle cx="${x}" cy="${y}" r="6" class="${on ? 'dot-on' : 'dot'}"/>`;

        function thumb(x, y, kind) {
            const fills = { grey: '#9c9494', dark: '#333', normal: '#b4b4ff', light: '#c9c9c9', white: '#f2f2f2', black: '#000', ball: '#777', hdr: '#e4e0e0', pipe: '#000' };
            let s = `<rect x="${x + 3}" y="${y + 4}" width="33" height="33" rx="3" fill="${fills[kind]}" class="thumbnail"/>`;
            if (kind === 'dark') s += `<rect x="${x + 4}" y="${y + 5}" width="31" height="12" fill="#8d8080"/>`;
            if (kind === 'pipe') s += `<path d="M${x + 9} ${y + 5}h12l10 31h-12z" fill="#fff"/>`;
            if (kind === 'ball') s += `<circle cx="${x + 19}" cy="${y + 20}" r="14" fill="url(#ball)"/>`;
            if (kind === 'hdr') s += `<path d="M${x + 5} ${y + 32}l24-10M${x + 8} ${y + 10}h22" stroke="#555" stroke-width="5"/>`;
            return s;
        }

        function node(x, y, name, type, kind, slots, used, wired = true) {
            const mtl = type === 'VRayMtl';
            const h = slots.length ? 51 + slots.length * 19 : 49;
            const head = slots.length ? 39 : 36;
            const sel = mtl && name.startsWith('Outlet');
            const t0 = mtl ? 98 : slots.length ? h * .26 : 14;
            const t1 = mtl ? 294 : slots.length ? h * .72 : 36;
            const oy = mtl ? 197 : slots.length ? h / 2 : 25;
            let s = `<path d="M${x + 138} ${y + t0 - 4}l10 6V${y + t1 - 3}l-10 6z" fill="${mtl ? '#3f7fae' : '#3fa871'}"/>`;
            s += `<path d="M${x} ${y}h140v${h - 7}l-7 7h-133z" class="node"/>`;
            s += `<rect x="${x}" y="${y}" width="140" height="${head}" fill="${sel ? '#33607f' : mtl ? 'url(#blue)' : 'url(#green)'}"/>`;
            if (mtl) s += `<path d="M${x} ${y}h82l-28 ${head}h-54z" fill="#b00a0a"/>`;
            if (!slots.length) s += `<path d="M${x} ${y + 41}h138" class="line"/>`;
            s += thumb(x, y, kind);
            s += `<text x="${x + 38}" y="${y + 15}" class="head ${sel ? 'sel' : ''}">${name}</text>`;
            s += `<text x="${x + 38}" y="${y + 32}" class="head ${sel ? 'sel' : ''}">${type}</text>`;
            if (slots.length) s += `<path d="M${x + 120} ${y + 9}h10" class="dash"/>`;
            slots.forEach((slot, i) => {
                const sy = y + 49 + i * 19;
                s += `<path d="M${x} ${sy + 9}h140" class="line"/>`;
                s += `<text x="${x + 12}" y="${sy + 4}" class="slot">${slot}</text>`;
                s += dot(x, sy, used.includes(i));
            });
            if (sel) s += `<rect x="${x - 4}" y="${y - 4}" width="148" height="${h + 8}" rx="6" class="selbox"/><path d="M${x + 144} ${y + t0}h8v196h-8" class="selbox"/>`;
            s += dot(x + 149, y + oy, wired && !mtl);
            parts.push(s);
            return [x + 149, y + oy];
        }

        function wire(from, x, y) {
            const mid = (from[0] + x) / 2;
            wires.push(`<path d="M${from[0]} ${from[1]}C${mid} ${from[1]} ${mid} ${y} ${x} ${y}" class="wire"/>`);
        }

        const layers = ['Layer 1', 'Layer 1 (Mask)', 'Layer 2', 'Layer 2 (Mask)'];
        const c1 = 347, c2 = 605, c3 = 864;
        [
            { y: 7, short: 'Filters_P...', a: ['Filters_PBR...', 'Filters_PBR ao', 'Filters_PBR...'], k: ['grey', 'dark', 'dark', 'grey'], mtl: 'Filters_PBR', g: 'Filters_PBR...', extra: ['Filters_PBR...', 358, 11, 'dark'] },
            { y: 565, short: 'Main_PB...', a: ['Main_PBR dif...', 'Main_PBR ao', 'Main_PBR no...'], k: ['light', 'white', 'light', 'ball'], mtl: 'Main_PBR', g: 'Main_PBR gl...', extra: ['Main_PBR e...', 440, 16, 'black'] },
            { y: 1125, short: 'Outlet_PB...', a: ['Outlet_PBR d...', 'Outlet_PBR ao', 'Outlet_PBR n...'], k: ['white', 'white', 'white', 'ball'], mtl: 'Outlet_PBR', g: 'Outlet_PBR g...' },
            { y: 1683, short: 'Detail_Dis...', a: ['Detail_Displa...', 'Detail_Displa...', 'Detail_Displa...'], k: ['pipe', 'pipe', 'pipe', 'ball'], mtl: 'Detail_Dis...', g: 'Detail_Displa...' }
        ].forEach(m => {
            const y = m.y;
            const used = m.extra ? [0, 3, 4, m.extra[2]] : [0, 3, 4];
            wire(node(c1, y, m.a[0], 'VRayHDRI', m.k[0], [], []), c2, y + 49);
            wire(node(c1, y + 80, m.a[1], 'VRayHDRI', m.k[1], [], []), c2, y + 87);
            wire(node(c1, y + 180, m.a[2], 'VRayHDRI', 'normal', [], []), c2, y + 209);
            wire(node(c2, y, m.short, 'Composite', m.k[2], layers, [0, 2]), c3, y + 169);
            wire(node(c2, y + 160, m.short, 'VRayNor ...', 'normal', ['Normal map', 'Bump map'], [0]), c3, y + 226);
            wire(node(c2, y + 279, m.g, 'VRayHDRI', 'light', [], []), c3, y + 245);
            if (m.extra) wire(node(c2, y + m.extra[1], m.extra[0], 'VRayHDRI', m.extra[3], [], []), c3, y + 169 + m.extra[2] * 19);
            node(c3, y + 120, m.mtl, 'VRayMtl', m.k[3], m.k[0] === 'pipe' ? detailSlots : mtlSlots, used);
        });
        node(c3, 2241, 'HDRI', 'VRayHDRI', 'hdr', [], [], false);
        document.getElementById('nodes').innerHTML += parts.join('') + wires.join('');
    </script>
</body>
</html>
```

FILE: styles.css
```css
* {
    box-sizing: border-box;
}

body {
    margin: 0;
    height: 100vh;
    overflow: hidden;
    background: #444;
    color: #eee;
    font-family: "DejaVu Sans Condensed", "DejaVu Sans", sans-serif;
    font-size: 13px;
}

button {
    padding: 0;
    border: 0;
    background: none;
    color: inherit;
    font: inherit;
}

input, select {
    font: inherit;
    color: inherit;
    min-width: 0;
}

.defs {
    position: absolute;
}

.grow {
    flex: 1;
}

.desktop {
    display: grid;
    grid-template-columns: minmax(0, 977fr) minmax(0, 943fr);
    grid-template-rows: minmax(0, 467fr) minmax(0, 613fr);
    height: 100vh;
}

.logo {
    width: 19px;
    height: 19px;
}

/* main window */
.max {
    display: flex;
    flex-direction: column;
    min-width: 0;
    overflow: hidden;
}

.titlebar {
    display: flex;
    align-items: center;
    gap: 6px;
    flex: 0 0 29px;
    padding-left: 2px;
    background: #fff;
    color: #999;
    font-family: "Noto Sans", sans-serif;
    font-size: 14px;
    white-space: nowrap;
}

.menu {
    display: flex;
    align-items: center;
    gap: 26px;
    flex: 0 0 27px;
    padding-left: 12px;
    background: linear-gradient(#525252, #434343);
    border-bottom: 1px solid #1c1c1c;
    font-size: 14px;
    white-space: nowrap;
}

.toolbar {
    display: flex;
    align-items: center;
    flex: 0 0 40px;
    padding-left: 3px;
    fill: #d0d0d0;
}

.grip {
    width: 3px;
    height: 32px;
    margin-right: 6px;
    border-left: 1px dotted #999;
    border-right: 1px dotted #999;
}

.tool {
    display: grid;
    place-items: center;
    flex: 0 0 40px;
    height: 36px;
    border: 1px solid transparent;
    border-radius: 5px;
}

.tool svg {
    width: 28px;
    height: 28px;
}

.on {
    background: #5b85c3;
}

.fly {
    position: relative;
}

.fly::after {
    content: "";
    position: absolute;
    right: 1px;
    bottom: 0;
    border: 3px solid transparent;
    border-right-color: #eee;
    border-bottom-color: #eee;
}

.sep {
    flex: 0 0 8px;
    height: 20px;
    background: linear-gradient(#1d1d1d, #1d1d1d) center / 1px 100% no-repeat;
}

.combo {
    position: relative;
    display: block;
    height: 22px;
}

.combo select {
    appearance: none;
    width: 100%;
    height: 100%;
    padding: 0 20px 0 7px;
    border: 0;
    border-radius: 0;
    background: #5f5f5f;
    color: #ddd;
}

.combo::after {
    content: "";
    position: absolute;
    right: 9px;
    top: 8px;
    border: 4px solid transparent;
    border-top: 6px solid #e0e0e0;
    border-bottom: 0;
}

.combo-top {
    flex: 0 0 85px;
    align-self: flex-start;
    margin: 4px 1px 0 0;
}

.stage {
    display: flex;
    flex: 1;
    min-height: 0;
}

.side {
    display: flex;
    flex-direction: column;
    align-items: center;
    flex: 0 0 42px;
    padding-top: 10px;
    overflow: hidden;
    background: radial-gradient(circle at 1px 1px, #aaa 1px, transparent 1px) 3px 3px / 3px 4px repeat-x;
}

.side button {
    flex: 0 0 38px;
    width: 38px;
}

.side svg {
    width: 24px;
    height: 24px;
    margin-top: 2px;
}

.side hr {
    flex: 0 0 2px;
    width: 36px;
    margin: 0 0 8px;
    border: 0;
    background: #1d1d1d;
}

.viewport {
    position: relative;
    flex: 0 0 116px;
    overflow: hidden;
    background: #333;
    border: 2px solid #333;
}

.viewport.active {
    flex: 1;
    margin-right: 4px;
    border-color: #7b6424;
    border-bottom: 0;
}

.scene {
    position: absolute;
    left: 0;
    top: 0;
    width: 100%;
    height: 100%;
}

.vlabel {
    position: relative;
    margin: 6px 0 8px 3px;
    color: #c8c8c8;
    font-size: 14px;
    line-height: 19px;
    white-space: nowrap;
}

.stats {
    position: relative;
    display: grid;
    grid-template-columns: 51px 87px 40px;
    grid-auto-rows: 20px;
    align-items: center;
    margin-left: 13px;
    color: #d6cc35;
    font-size: 14px;
}

.viewcube {
    position: absolute;
    right: 0;
    top: 0;
}

.brand {
    font-size: 9px;
    font-weight: bold;
    fill: #5a5a5a;
}

.cubetext {
    font-family: "Liberation Sans", sans-serif;
    font-size: 7px;
    font-weight: bold;
    fill: #3d4450;
}

/* windows with a light title */
.wintitle {
    display: flex;
    align-items: center;
    gap: 6px;
    flex: 0 0 38px;
    padding-left: 10px;
    background: #fff;
    color: #8a8a8a;
    font-family: "Noto Sans", sans-serif;
    font-size: 14px;
}

.winbtns {
    display: flex;
    margin-left: auto;
}

.assets .winbtns {
    margin-right: -4px;
}

.winbtns button {
    width: 59px;
    height: 30px;
}

.winbtns svg {
    width: 14px;
    height: 14px;
    fill: none;
    stroke: #888;
}

.winmenu {
    display: flex;
    align-items: center;
    gap: 13px;
    flex: 0 0 25px;
    padding-left: 7px;
    background: #fff;
    border-bottom: 2px solid #f0f0f0;
    color: #6a6a6a;
    font-family: "Noto Sans", sans-serif;
    font-size: 14px;
    white-space: nowrap;
}

/* asset tracking */
.assets {
    grid-row: 2;
    display: flex;
    flex-direction: column;
    min-width: 0;
    padding: 0 2px 4px 1px;
    border-top: 1px solid #2a2a2a;
}

.assetbar {
    display: flex;
    align-items: center;
    gap: 3px;
    flex: 0 0 35px;
    padding: 6px 0 0 3px;
}

.assetbar button {
    width: 27px;
    height: 27px;
    border-radius: 3px;
}

.assetbar svg {
    width: 14px;
    height: 14px;
    margin-top: 3px;
}

.listframe {
    display: grid;
    grid-template-columns: minmax(0, 1fr) 20px;
    grid-template-rows: minmax(0, 1fr) 21px;
    flex: 1;
    min-height: 0;
    margin-left: 4px;
    border: 1px solid #999;
    border-right-color: #ddd;
}

.listclip {
    overflow: hidden;
}

.files {
    width: 100%;
    table-layout: fixed;
    border-collapse: collapse;
    color: #fff;
    font-family: "Noto Sans", sans-serif;
    font-size: 14px;
    line-height: 20px;
}

.c-name {
    width: 337px;
}

.c-status {
    width: 54px;
}

.files th {
    height: 25px;
    padding: 0 6px;
    border-right: 1px solid #ddd;
    background: #fff;
    color: #111;
    font-weight: normal;
    text-align: left;
}

.files td {
    height: 24px;
    padding: 0 0 0 6px;
    overflow: hidden;
    border-right: 1px solid #e8e8e8;
    border-bottom: 1px solid #e8e8e8;
    text-overflow: ellipsis;
    white-space: nowrap;
}

.files td:last-child {
    text-overflow: clip;
}

.files svg {
    width: 20px;
    height: 20px;
    margin-right: 2px;
    vertical-align: top;
}

.files td.lvl0 { padding-left: 23px; }
.files td.lvl1 { padding-left: 43px; }
.files td.lvl2 { padding-left: 63px; }
.files td.lvl3 { padding-left: 83px; }

.vscroll, .hscroll {
    display: flex;
    align-items: center;
    background: #f0f0f0;
}

.vscroll {
    flex-direction: column;
    grid-row: 1 / 3;
    grid-column: 2;
    padding: 6px 0 27px;
}

.hscroll {
    padding: 0 6px;
}

.vscroll svg, .hscroll svg {
    width: 10px;
    height: 10px;
    fill: none;
    stroke: #555;
    stroke-width: 2;
}

.track {
    flex: 1;
    margin: 5px 0;
    width: 100%;
}

.thumb {
    height: 57%;
    background: #cdcdcd;
}

.hscroll .track {
    width: auto;
    height: 100%;
    margin: 0 5px;
}

.hscroll .thumb {
    width: 82%;
    height: 100%;
}

.statusbox {
    flex: 0 0 28px;
    margin: 6px 0 0 3px;
    border: 2px solid #e0e0e0;
}

/* slate editor */
.slate {
    grid-column: 2;
    grid-row: 1 / 3;
    display: flex;
    flex-direction: column;
    min-width: 0;
    border-top: 1px solid #999;
    border-right: 1px solid #333;
}

.slate .wintitle {
    flex-basis: 37px;
}

.slate .winmenu {
    gap: 15px;
}

.slatebar {
    display: flex;
    align-items: center;
    flex: 0 0 27px;
    padding-right: 4px;
    fill: #d0d0d0;
}

.slatebar button {
    flex: 0 0 28px;
    height: 26px;
    border: 1px solid transparent;
    border-radius: 4px;
}

.slatebar button svg {
    width: 20px;
    height: 20px;
    margin-top: 2px;
}

.combo-view {
    flex: 0 1 248px;
}

.slatebody {
    display: flex;
    flex: 1;
    min-height: 0;
}

.graph {
    display: flex;
    flex-direction: column;
    flex: 1;
    min-width: 0;
    border: 1px solid #161616;
    border-left: 0;
}

.tabs {
    flex: 0 0 24px;
    border-bottom: 1px solid #1e1e1e;
}

.tabs button {
    width: 71px;
    height: 19px;
    padding-right: 17px;
    border-top: 1px solid #888;
    border-right: 1px solid #222;
    color: #fff;
    font-family: "Liberation Sans", sans-serif;
    font-size: 12px;
    font-style: italic;
    font-weight: bold;
    text-shadow: 1px 1px #111;
}

.canvas {
    position: relative;
    flex: 1;
    min-height: 0;
    background:
        repeating-linear-gradient(90deg, #494949 0 1px, transparent 1px 4px),
        repeating-linear-gradient(#484848 0 1px, #424242 1px 4px);
}

#nodes {
    display: block;
    width: 100%;
    height: 100%;
}

.node {
    fill: #aeb9c6;
    stroke: #2d2d2d;
    stroke-width: 1;
}

.line {
    stroke: #8e9aa8;
    stroke-width: 1;
}

.dash {
    stroke: #16402a;
    stroke-width: 3;
}

.thumbnail {
    stroke: #c8dccf;
    stroke-width: 2;
}

.dot {
    fill: #a5bbd4;
    stroke: #6b7f96;
    stroke-width: 1;
}

.dot-on {
    fill: #e0f000;
}

.wire {
    fill: none;
    stroke: #e4696a;
    stroke-width: 3;
}

.selbox {
    fill: none;
    stroke: #e8e8e8;
    stroke-width: 3;
    stroke-dasharray: 7 4;
}

.head {
    font-family: "Liberation Sans", sans-serif;
    font-size: 13px;
    font-weight: bold;
    fill: #0e2a1b;
}

.head.sel {
    fill: #fff;
}

.slot {
    font-family: "Liberation Sans", sans-serif;
    font-size: 11px;
    fill: #111;
}

.find {
    position: absolute;
    left: 3px;
    bottom: 3px;
    width: 35px;
    height: 36px;
    border: 1px solid #505050;
    border-radius: 5px;
}

.find svg {
    width: 24px;
    height: 24px;
    border-radius: 4px;
    background: #5a5a5a;
    vertical-align: middle;
}

/* right panels */
.panels {
    display: flex;
    flex-direction: column;
    flex: 0 0 460px;
    gap: 5px;
    min-width: 0;
    padding: 0 2px 0 4px;
}

.dock {
    border: 1px solid #161616;
}

.dock h2 {
    display: flex;
    justify-content: space-between;
    align-items: center;
    height: 19px;
    margin: 0;
    padding: 0 5px 0 7px;
    border-top: 1px solid #888;
    border-bottom: 1px solid #161616;
    background: linear-gradient(#4c4c4c, #333);
    color: #fff;
    font-family: "Liberation Sans", sans-serif;
    font-size: 12px;
    text-shadow: 1px 1px #111;
}

.dock h2 button {
    color: #111;
    font-size: 13px;
    font-weight: bold;
    text-shadow: 0 0 1px #ccc;
}

.navi {
    display: grid;
    place-items: center;
    height: 98px;
    padding-right: 6px;
}

.navi > svg {
    width: 49px;
    height: 94px;
}

.dock-params {
    display: flex;
    flex-direction: column;
    flex: 1;
    min-height: 0;
}

.matname {
    flex: 0 0 21px;
    margin: 4px 5px 6px;
    padding: 0 3px;
    border: 0;
    background: #646464;
    color: #ddd;
}

.scrollarea {
    display: flex;
    gap: 4px;
    flex: 1;
    min-height: 0;
    overflow: hidden;
    padding: 0 2px 0 1px;
}

.rollouts {
    flex: 1;
    min-width: 0;
}

.pscroll {
    flex: 0 0 7px;
    height: 488px;
    border-radius: 3px;
    background: #575757;
}

.rollout {
    margin-bottom: 5px;
    border-radius: 4px;
    background: #505050;
    color: #f0f0f0;
}

.rollout h3 {
    display: flex;
    align-items: center;
    gap: 7px;
    height: 24px;
    margin: 0;
    padding: 0 8px;
    font-size: 13px;
}

.rollout h3::before {
    content: "";
    border: 4px solid transparent;
    border-top: 6px solid #bbb;
    border-bottom: 0;
}

.rollout h3::after {
    content: "";
    width: 9px;
    height: 9px;
    margin-left: auto;
    background:
        repeating-linear-gradient(90deg, transparent 0 1px, #505050 1px 3px),
        repeating-linear-gradient(#aaa 0 1px, transparent 1px 3px);
}

.group {
    display: grid;
    grid-template-columns: 212px minmax(0, 1fr);
    margin: 0 4px;
    padding: 10px 0 12px 7px;
    border-bottom: 3px double #111;
}

.group.first {
    padding-top: 3px;
}

.group.last {
    padding: 8px 0 8px 7px;
    border-bottom: 0;
}

.group.brdf {
    padding: 4px 0 8px 7px;
    border-bottom: 0;
}

.row {
    display: flex;
    align-items: center;
    height: 24px;
    white-space: nowrap;
}

.row.tall {
    height: 29px;
}

.row.off {
    color: #858585;
}

.lbl {
    flex: 0 0 110px;
}

.lbl.lk {
    flex-basis: 86px;
}

.group > div + div .lbl {
    flex-basis: 114px;
}

.swatch {
    width: 62px;
    height: 18px;
    border: 1px solid #111;
}

.swatch.black { background: #000; }
.swatch.white { background: #fff; }
.swatch.wide { width: 85px; }

.map {
    width: 18px;
    height: 18px;
    margin-left: 6px;
    border-radius: 4px;
    background: #606060;
    color: #d5d5d5;
    font-size: 12px;
    line-height: 18px;
}

.map.on {
    background: #5b85c3;
}

.map.lock {
    margin: 0 6px 0 0;
}

.spin {
    position: relative;
    width: 62px;
    height: 18px;
}

.spin input {
    display: block;
    width: 100%;
    height: 100%;
    padding: 0 14px 0 3px;
    border: 0;
    background: #636363;
    color: #d5d5d5;
}

.spin.wide {
    width: 85px;
}

.spin input:disabled {
    background: #575757;
    color: #858585;
}

.spin::before, .spin::after {
    content: "";
    position: absolute;
    right: 4px;
    border: 3px solid transparent;
}

.spin::before {
    top: 3px;
    border-bottom: 5px solid #ddd;
    border-top: 0;
}

.spin::after {
    bottom: 3px;
    border-top: 5px solid #ddd;
    border-bottom: 0;
}

.off .spin::before, .spin.off::before { border-bottom-color: #8a8a8a; }
.off .spin::after, .spin.off::after { border-top-color: #8a8a8a; }

.check, .radio {
    display: flex;
    align-items: center;
    gap: 4px;
}

.radio {
    gap: 7px;
}

.check input, .radio input {
    appearance: none;
    display: grid;
    place-items: center;
    width: 12px;
    height: 12px;
    margin: 0 0 0 1px;
    background: #646464;
}

.radio input {
    width: 14px;
    height: 14px;
    border-radius: 50%;
}

.check input:checked::before {
    content: "✔";
    color: #f0f0f0;
    font-size: 12px;
    line-height: 12px;
}

.radio input:checked::before {
    content: "";
    width: 8px;
    height: 8px;
    border-radius: 50%;
    background: #e8e8e8;
}

.gi {
    flex: 0 0 76px;
}

.mult {
    flex: 0 0 38px;
}

.combo-mid {
    width: 94px;
}

.combo-big {
    width: 183px;
    margin-left: 1px;
}

.narrow .spin {
    width: 75px;
}

.group > .narrow .row .lbl {
    flex-basis: 101px;
}

.axes {
    display: flex;
    gap: 10px;
}

.axes .map {
    width: 26px;
    margin: 0;
}

.narrow .end {
    justify-content: space-between;
    width: 199px;
}

.slatefoot {
    display: flex;
    align-items: center;
    flex: 0 0 30px;
    padding: 0 0 1px 1px;
    color: #fff;
    font-size: 12px;
    fill: #d0d0d0;
}

.slatefoot button {
    width: 28px;
    height: 24px;
    border-radius: 3px;
}

.slatefoot button.on {
    width: 26px;
    height: 25px;
    margin-right: 3px;
}

.slatefoot svg {
    width: 19px;
    height: 19px;
    margin-top: 2px;
}

.slatefoot .teal {
    fill: #45c1be;
}

.combo-zoom {
    flex: 0 0 66px;
    margin-right: 2px;
}

.combo-zoom select {
    padding-left: 4px;
}
```
